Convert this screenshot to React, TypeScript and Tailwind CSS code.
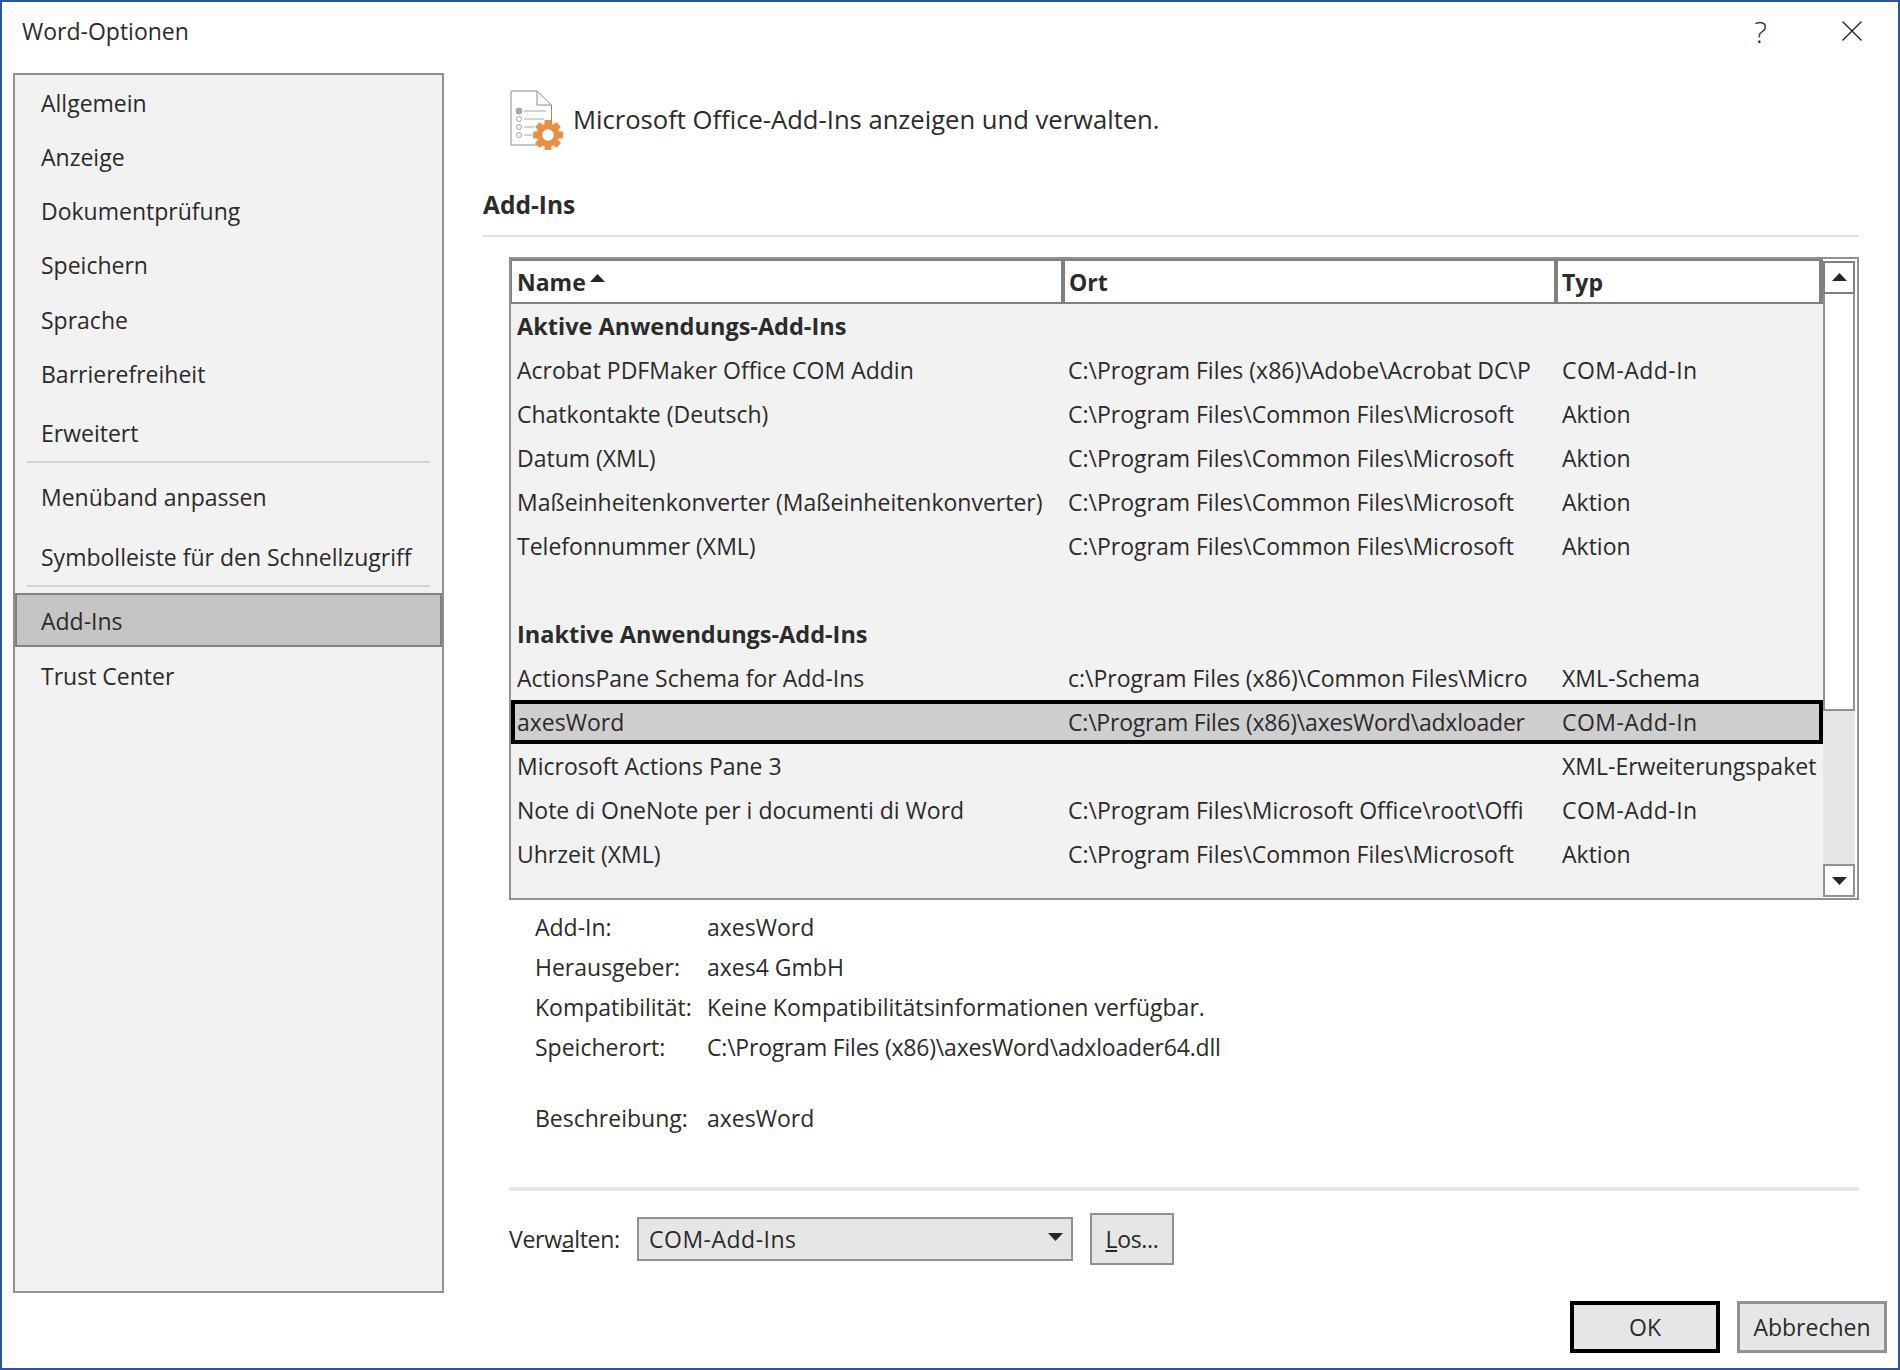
const sideTop = ['Allgemein', 'Anzeige', 'Dokumentprüfung', 'Speichern', 'Sprache', 'Barrierefreiheit'];

const activeRows = [
  ['Acrobat PDFMaker Office COM Addin', 'C:\\Program Files (x86)\\Adobe\\Acrobat DC\\P', 'COM-Add-In'],
  ['Chatkontakte (Deutsch)', 'C:\\Program Files\\Common Files\\Microsoft', 'Aktion'],
  ['Datum (XML)', 'C:\\Program Files\\Common Files\\Microsoft', 'Aktion'],
  ['Maßeinheitenkonverter (Maßeinheitenkonverter)', 'C:\\Program Files\\Common Files\\Microsoft', 'Aktion'],
  ['Telefonnummer (XML)', 'C:\\Program Files\\Common Files\\Microsoft', 'Aktion'],
];

const inactiveAfter = [
  ['Microsoft Actions Pane 3', '', 'XML-Erweiterungspaket'],
  ['Note di OneNote per i documenti di Word', 'C:\\Program Files\\Microsoft Office\\root\\Offi', 'COM-Add-In'],
  ['Uhrzeit (XML)', 'C:\\Program Files\\Common Files\\Microsoft', 'Aktion'],
];

const details = [
  ['Add-In:', 'axesWord'],
  ['Herausgeber:', 'axes4 GmbH'],
  ['Kompatibilität:', 'Keine Kompatibilitätsinformationen verfügbar.'],
  ['Speicherort:', 'C:\\Program Files (x86)\\axesWord\\adxloader64.dll'],
];

function DocGearIcon() {
  const teeth = [0, 45, 90, 135, 180, 225, 270, 315];
  return (
    <svg width="54" height="61" viewBox="0 0 54 61" className="shrink-0">
      <path d="M1 1H27L41.5 15V55H1Z" fill="#fff" stroke="#8c8c8c" strokeWidth="1" />
      <path d="M27 1V15H41.5" fill="none" stroke="#8c8c8c" strokeWidth="1" />
      <circle cx="9" cy="21" r="3" fill="#a6a6a6" stroke="#a6a6a6" />
      <circle cx="9" cy="29" r="2.5" fill="#fff" stroke="#a6a6a6" />
      <circle cx="9" cy="37" r="2.5" fill="#fff" stroke="#a6a6a6" />
      <circle cx="9" cy="45" r="2.5" fill="#fff" stroke="#a6a6a6" />
      <path d="M14 21H36M14 29H34M14 37H24M14 45H22" stroke="#a6a6a6" strokeWidth="1" />
      <g fill="#ea8f42">
        <circle cx="38" cy="45" r="11.5" />
        {teeth.map((a) => (
          <rect key={a} x="34.5" y="30" width="7" height="6" rx="1" transform={`rotate(${a} 38 45)`} />
        ))}
      </g>
      <circle cx="38" cy="45" r="5.8" fill="#fff" />
    </svg>
  );
}

function Triangle({ down, className }: { down?: boolean; className?: string }) {
  return (
    <svg width="15" height="8" viewBox="0 0 15 8" className={className}>
      <path d={down ? 'M0 0H15L7.5 8Z' : 'M7.5 0L15 8H0Z'} fill="#262626" />
    </svg>
  );
}

function Row({ cells, selected }: { cells: string[]; selected?: boolean }) {
  const typ = cells[2] === 'COM-Add-In' ? 'flex-1 whitespace-nowrap pl-[6px] tracking-[0.45px]' : 'flex-1 whitespace-nowrap pl-[6px]';
  return (
    <div
      className={
        selected
          ? 'box-border flex h-[44px] items-center border-4 border-black bg-[#cfcfcf]'
          : 'flex h-[44px] items-center'
      }
    >
      <div className={selected ? 'w-[548px] pl-[2px] whitespace-nowrap' : 'w-[552px] pl-[6px] whitespace-nowrap'}>{cells[0]}</div>
      <div className={selected ? 'w-[493px] pl-[5px] whitespace-nowrap overflow-hidden tracking-[-0.2px]' : 'w-[493px] pl-[5px] whitespace-nowrap overflow-hidden'}>{cells[1]}</div>
      <div className={typ}>{cells[2]}</div>
    </div>
  );
}

function GroupTitle({ children }: { children: string }) {
  return <div className="flex h-[44px] items-center pl-[6px] pt-[2px] text-[23.5px] font-bold">{children}</div>;
}

export default function App() {
  return (
    <div
      className="box-border flex h-[1370px] w-[1900px] flex-col overflow-hidden border-2 border-[#2b579a] bg-white text-[23px] text-[#2b2b2b]"
      style={{ fontFamily: '"Open Sans", sans-serif' }}
    >
      {/* title bar */}
      <div className="flex h-[71px] shrink-0 items-center pl-[20px]">
        <div className="flex-1 -mt-[13px]">Word-Optionen</div>
        <div className="-mt-[13px] mr-[75px] text-[30px] font-light">?</div>
        <svg width="20" height="20" viewBox="0 0 20 20" className="mr-[36px] -mt-[13px]">
          <path d="M0.5 0.5L19.5 19.5M19.5 0.5L0.5 19.5" stroke="#262626" strokeWidth="1.4" />
        </svg>
      </div>

      <div className="flex h-[1220px] shrink-0">
        {/* left nav */}
        <div className="ml-[11px] box-border flex w-[431px] shrink-0 flex-col border-2 border-[#919191] bg-[#f2f2f2] pt-[1px]">
          {sideTop.map((s) => (
            <div key={s} className="flex h-[54.2px] items-center pl-[26px]">{s}</div>
          ))}
          <div className="mt-[5px] flex h-[54px] items-center pl-[26px]">Erweitert</div>
          <div className="mx-[12px] mt-[1px] h-[2px] bg-[#d2d2d2]"></div>
          <div className="mt-[7px] flex h-[54px] items-center pl-[26px]">Menüband anpassen</div>
          <div className="mt-[6px] flex h-[54px] items-center pl-[26px] whitespace-nowrap">Symbolleiste für den Schnellzugriff</div>
          <div className="mx-[12px] mt-[1px] h-[2px] bg-[#d2d2d2]"></div>
          <div className="mt-[6px] box-border flex h-[54px] items-center border-2 border-[#808080] bg-[#c5c5c5] pl-[24px] pt-[2px]">Add-Ins</div>
          <div className="mt-[2px] flex h-[54px] items-center pl-[26px]">Trust Center</div>
        </div>

        {/* right pane */}
        <div className="ml-[39px] flex w-[1376px] shrink-0 flex-col pt-[17px]">
          <div className="flex h-[61px] items-center pl-[27px]">
            <DocGearIcon />
            <span className="ml-[9px] text-[25.6px]">Microsoft Office-Add-Ins anzeigen und verwalten.</span>
          </div>
          <div className="mt-[36px] flex h-[36px] items-center text-[24.5px] font-bold">Add-Ins</div>
          <div className="mt-[12px] h-[2px] bg-[#e1e1e1]"></div>

          {/* list */}
          <div className="ml-[26px] mt-[20px] box-border flex h-[643px] border-2 border-[#919191]">
            <div className="flex w-[1312px] shrink-0 flex-col bg-[#f2f2f2]">
              <div className="box-border flex h-[45px] shrink-0 items-center border-y-2 border-l border-[#808080] bg-white font-bold">
                <div className="box-border flex h-full w-[553px] items-center gap-[4px] border-r-4 border-[#808080] pl-[5px] pt-[2px]">
                  Name <Triangle className="-mt-[9px]" />
                </div>
                <div className="box-border flex h-full w-[493px] items-center border-r-4 border-[#808080] pl-[4px] pt-[2px]">Ort</div>
                <div className="box-border flex h-full flex-1 items-center border-r-4 border-[#808080] pl-[4px] pt-[2px]">Typ</div>
              </div>
              <GroupTitle>Aktive Anwendungs-Add-Ins</GroupTitle>
              {activeRows.map((r) => (
                <Row key={r[0]} cells={r} />
              ))}
              <div className="h-[44px]"></div>
              <GroupTitle>Inaktive Anwendungs-Add-Ins</GroupTitle>
              <Row cells={['ActionsPane Schema for Add-Ins', 'c:\\Program Files (x86)\\Common Files\\Micro', 'XML-Schema']} />
              <Row selected cells={['axesWord', 'C:\\Program Files (x86)\\axesWord\\adxloader', 'COM-Add-In']} />
              {inactiveAfter.map((r) => (
                <Row key={r[0]} cells={r} />
              ))}
            </div>
            <div className="flex flex-1 flex-col bg-white pt-[2px] pr-[2px] pb-[1px]">
              <div className="box-border flex h-[33px] shrink-0 items-center justify-center border-2 border-[#808080] bg-white">
                <Triangle className="-mt-[2px]" />
              </div>
              <div className="box-border h-[417px] shrink-0 border-x-2 border-b-2 border-[#919191] bg-white"></div>
              <div className="flex-1 bg-[#e6e6e6]"></div>
              <div className="box-border flex h-[33px] shrink-0 items-center justify-center border-2 border-[#919191] bg-white">
                <Triangle down />
              </div>
            </div>
          </div>

          {/* details */}
          <div className="ml-[52px] mt-[7px] flex flex-col">
            {details.map((d) => (
              <div key={d[0]} className="flex h-[40px] items-center">
                <div className="w-[172px]">{d[0]}</div>
                <div className={d[0] === 'Speicherort:' ? 'tracking-[-0.2px]' : ''}>{d[1]}</div>
              </div>
            ))}
            <div className="mt-[31px] flex h-[40px] items-center">
              <div className="w-[172px]">Beschreibung:</div>
              <div>axesWord</div>
            </div>
          </div>

          <div className="ml-[26px] mt-[49px] h-[4px] bg-[#e6e6e6]"></div>

          {/* manage */}
          <div className="ml-[26px] mt-[22px] flex h-[52px] items-center">
            <span className="w-[128px] pt-[1px] tracking-[-0.3px]">Verw<u>a</u>lten:</span>
            <div className="box-border flex h-[44px] w-[436px] items-center justify-between border-2 border-[#919191] bg-[#e6e6e6] pl-[10px] pr-[8px]">
              <span className="pt-[1px] tracking-[0.5px]">COM-Add-Ins</span>
              <Triangle down className="-mt-[4px]" />
            </div>
            <div className="ml-[17px] box-border flex h-[52px] w-[84px] items-center justify-center border-2 border-[#919191] bg-[#e6e6e6]">
              <span className="pt-[1px] tracking-[-0.3px]"><u>L</u>os...</span>
            </div>
          </div>
        </div>
      </div>

      {/* footer buttons */}
      <div className="mt-[8px] flex justify-end gap-[17px] pr-[11px]">
        <div className="box-border flex h-[52px] w-[150px] items-center justify-center border-4 border-black bg-[#e6e6e6] pt-[1px]">OK</div>
        <div className="box-border flex h-[52px] w-[150px] items-center justify-center border-[3px] border-[#919191] bg-[#e6e6e6] pt-[1px]">Abbrechen</div>
      </div>
    </div>
  );
}
